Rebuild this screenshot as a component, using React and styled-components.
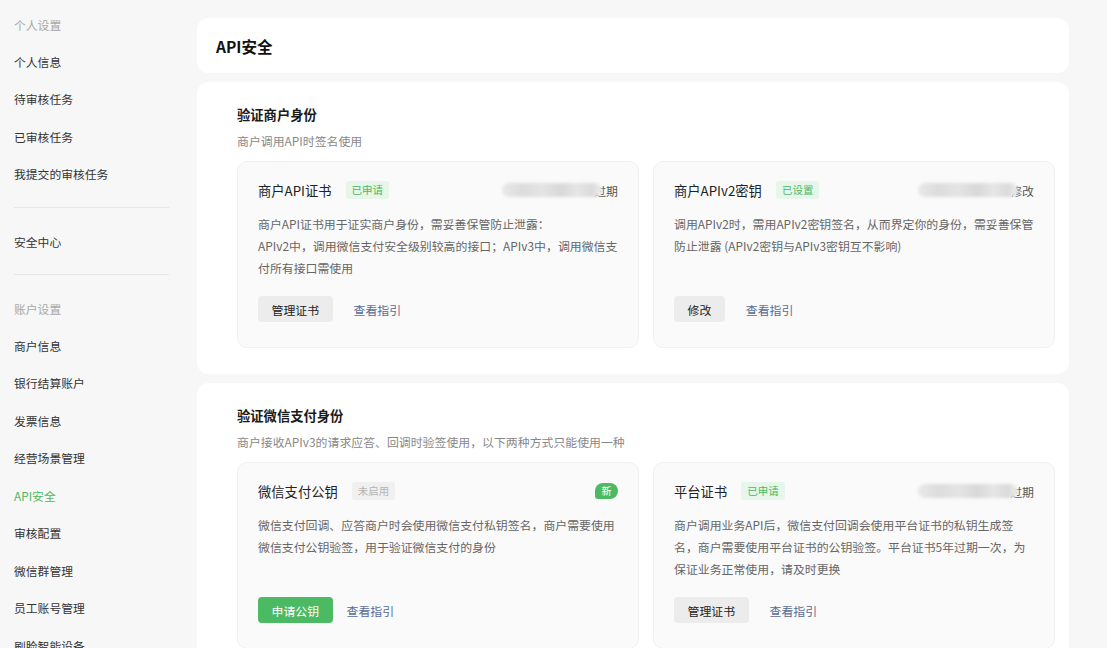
import React from 'react';
import styled, {createGlobalStyle} from 'styled-components';

const GlobalStyle = createGlobalStyle`
    body {
        margin: 0;
        background: #f7f7f7;
        font-family: "Noto Sans CJK SC", "Noto Sans", "Liberation Sans", sans-serif;
        color: #1a1a1a;
    }
`;

const sideGroups = [
    {title: '个人设置', items: ['个人信息', '待审核任务', '已审核任务', '我提交的审核任务']},
    {items: ['安全中心']},
    {title: '账户设置', items: ['商户信息', '银行结算账户', '发票信息', '经营场景管理', 'API安全', '审核配置', '微信群管理', '员工账号管理', '刷脸智能设备']},
];

const sections = [
    {
        title: '验证商户身份',
        sub: '商户调用API时签名使用',
        cards: [
            {
                name: '商户API证书',
                badge: {text: '已申请', kind: 'ok'},
                extra: '过期',
                desc: ['商户API证书用于证实商户身份，需妥善保管防止泄露：', 'APIv2中，调用微信支付安全级别较高的接口；APIv3中，调用微信支付所有接口需使用'],
                button: {text: '管理证书'},
            },
            {
                name: '商户APIv2密钥',
                badge: {text: '已设置', kind: 'ok'},
                extra: '修改',
                desc: ['调用APIv2时，需用APIv2密钥签名，从而界定你的身份，需妥善保管防止泄露 (APIv2密钥与APIv3密钥互不影响)'],
                button: {text: '修改'},
            },
        ],
    },
    {
        title: '验证微信支付身份',
        sub: '商户接收APIv3的请求应答、回调时验签使用，以下两种方式只能使用一种',
        cards: [
            {
                name: '微信支付公钥',
                badge: {text: '未启用', kind: 'off'},
                isNew: true,
                desc: ['微信支付回调、应答商户时会使用微信支付私钥签名，商户需要使用微信支付公钥验签，用于验证微信支付的身份'],
                button: {text: '申请公钥', primary: true},
                linkGap: 14,
            },
            {
                name: '平台证书',
                badge: {text: '已申请', kind: 'ok'},
                extra: '过期',
                desc: ['商户调用业务API后，微信支付回调会使用平台证书的私钥生成签名，商户需要使用平台证书的公钥验签。平台证书5年过期一次，为保证业务正常使用，请及时更换'],
                button: {text: '管理证书'},
            },
        ],
    },
];

const App = () => {
    return (
        <>
        <GlobalStyle />
        <Page>
            <Sidebar>
                {sideGroups.map((group, i) => (
                    <React.Fragment key={i}>
                        {i > 0 && <Divider />}
                        {group.title && <GroupTitle>{group.title}</GroupTitle>}
                        {group.items.map(item => (
                            <NavItem key={item} active={item === 'API安全'}>{item}</NavItem>
                        ))}
                    </React.Fragment>
                ))}
            </Sidebar>
            <Main>
                <HeaderCard>
                    <PageTitle>API安全</PageTitle>
                </HeaderCard>
                {sections.map(section => (
                    <Section key={section.title}>
                        <SectionTitle>{section.title}</SectionTitle>
                        <SectionSub>{section.sub}</SectionSub>
                        <CardGrid>
                            {section.cards.map(card => (
                                <KeyCard key={card.name}>
                                    <CardHead>
                                        <CardName>{card.name}</CardName>
                                        <Badge kind={card.badge.kind}>{card.badge.text}</Badge>
                                        <HeadRight>
                                            {card.extra && (
                                                <>
                                                    <Blurred />
                                                    <ExtraText>{card.extra}</ExtraText>
                                                </>
                                            )}
                                            {card.isNew && <NewTag>新</NewTag>}
                                        </HeadRight>
                                    </CardHead>
                                    <Desc>
                                        {card.desc.map(line => <div key={line}>{line}</div>)}
                                    </Desc>
                                    <Actions gap={card.linkGap || 21}>
                                        <Button primary={card.button.primary}>{card.button.text}</Button>
                                        <GuideLink>查看指引</GuideLink>
                                    </Actions>
                                </KeyCard>
                            ))}
                        </CardGrid>
                    </Section>
                ))}
            </Main>
        </Page>
        </>
    )
}

const Page = styled.div`
    display: flex;
    align-items: flex-start;
    min-height: 100vh;
`;

const Sidebar = styled.nav`
    width: 155px;
    flex-shrink: 0;
    padding: 6px 28px 0 14px;
`;

const GroupTitle = styled.div`
    height: 36.5px;
    line-height: 37px;
    font-size: 11.8px;
    color: #a8a8a8;
`;

const NavItem = styled.div`
    height: 37.5px;
    line-height: 37.5px;
    font-size: 11.8px;
    color: ${props => props.active ? '#4cb963' : '#333'};
`;

const Divider = styled.div`
    height: 1px;
    background: #e6e6e6;
    margin: 14px 0 15px;
`;

const Main = styled.main`
    width: 872px;
    padding-top: 18px;
    display: flex;
    flex-direction: column;
    gap: 9px;
`;

const HeaderCard = styled.div`
    height: 55px;
    background: #fff;
    border-radius: 12px;
    padding: 0 19px;
    display: flex;
    align-items: center;
`;

const PageTitle = styled.h1`
    margin: 0;
    font-size: 15.5px;
    font-weight: 600;
    color: #111;
`;

const Section = styled.section`
    background: #fff;
    border-radius: 12px;
    padding: 23px 14px 26px 40px;
`;

const SectionTitle = styled.h2`
    margin: 0;
    font-size: 13.3px;
    line-height: 20px;
    font-weight: 700;
    color: #1a1a1a;
`;

const SectionSub = styled.p`
    margin: 7px 0 0;
    font-size: 11.9px;
    line-height: 18px;
    color: #888;
`;

const CardGrid = styled.div`
    margin-top: 11px;
    display: grid;
    grid-template-columns: 1fr 1fr;
    gap: 14px;
`;

const KeyCard = styled.div`
    background: #fafafa;
    border: 1px solid #f1f1f1;
    border-radius: 10px;
    padding: 19px 20px 25px;
    display: flex;
    flex-direction: column;
`;

const CardHead = styled.div`
    display: flex;
    align-items: center;
    height: 18px;
`;

const CardName = styled.span`
    font-size: 13.3px;
    color: #222;
`;

const Badge = styled.span`
    margin-left: 14px;
    height: 18px;
    line-height: 18px;
    padding: 0 6px;
    border-radius: 3px;
    font-size: 10.5px;
    background: ${props => props.kind === 'ok' ? '#e6f6ea' : '#f0f0f0'};
    color: ${props => props.kind === 'ok' ? '#4cb963' : '#b4b4b4'};
`;

const HeadRight = styled.div`
    margin-left: auto;
    display: flex;
    align-items: center;
`;

const Blurred = styled.span`
    position: relative;
    z-index: 1;
    width: 100px;
    height: 14px;
    margin-right: -8px;
    border-radius: 7px;
    background: linear-gradient(90deg, #e9e9e9 0%, #dcdcdc 20%, #e4e4e4 40%, #d8d8d8 60%, #e6e6e6 75%, #dadada 90%, #efefef 100%);
    filter: blur(1.5px);
`;

const ExtraText = styled.span`
    font-size: 11.9px;
    color: #555;
`;

const NewTag = styled.span`
    width: 23px;
    height: 16px;
    line-height: 16px;
    text-align: center;
    font-size: 10px;
    color: #fff;
    background: #4cb963;
    border-radius: 8px 8px 8px 3px;
`;

const Desc = styled.div`
    margin: 14px 0 17px;
    font-size: 11.9px;
    line-height: 22px;
    color: #666;
`;

const Actions = styled.div`
    margin-top: auto;
    display: flex;
    align-items: center;
    gap: ${props => props.gap}px;
`;

const Button = styled.button`
    height: 26px;
    padding: 0 13.5px;
    border: none;
    border-radius: 4px;
    font-family: inherit;
    font-size: 11.9px;
    font-weight: 400;
    cursor: pointer;
    background: ${props => props.primary ? '#4cb963' : '#ececec'};
    color: ${props => props.primary ? '#fff' : '#222'};
`;

const GuideLink = styled.a`
    font-size: 11.9px;
    color: #576b95;
    cursor: pointer;
`;

export default App;
